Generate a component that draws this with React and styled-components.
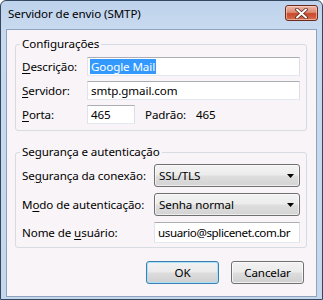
import React from 'react';
import styled, { createGlobalStyle } from 'styled-components';

const Global = createGlobalStyle`
  html, body { margin: 0; padding: 0; width: 323px; height: 300px; overflow: hidden; background: #fff; }
  body { font-family: "Noto Sans", "Open Sans", sans-serif; font-size: 11.6px; letter-spacing: -0.1px; color: #000; }
  #root { width: 323px; height: 300px; }
  * { box-sizing: border-box; }
`;

const Window = styled.div`
  width: 323px;
  height: 300px;
  border: 1px solid #34475c;
  border-radius: 6px 6px 0 0;
  background: linear-gradient(180deg, #bdd2ec 0px, #c8daef 28px, #c4d7ed 100%);
  padding: 0 5px 2px 5px;
  display: flex;
  flex-direction: column;
`;

const TitleBar = styled.div`
  height: 28px;
  display: flex;
  align-items: flex-start;
  padding-left: 2px;
  margin-right: -1px;
`;

const Title = styled.span`
  line-height: 16px;
  margin-top: 5px;
  white-space: nowrap;
`;

const CloseButton = styled.div`
  margin-left: auto;
  margin-top: 4px;
  width: 33px;
  height: 16px;
  border: 1px solid #6b2a1c;
  border-radius: 3px;
  background: linear-gradient(180deg, #eeb8a8 0%, #dc8b74 45%, #c8472b 55%, #d4704f 100%);
  box-shadow: inset 0 0 0 1px rgba(255, 220, 210, 0.55);
  display: flex;
  align-items: center;
  justify-content: center;
`;

const Content = styled.div`
  flex: 1;
  border: 1px solid #8ea4be;
  background: #f8f4f7;
  padding: 6px 9px 0 8px;
  display: flex;
  flex-direction: column;
`;

const Group = styled.fieldset`
  margin: 0;
  margin-top: ${(p) => p.$mt || 0}px;
  min-width: 0;
  border: 1px solid #d6dce2;
  border-radius: 3px;
  padding: ${(p) => p.$pt}px 6px ${(p) => p.$pb}px 6px;
  display: flex;
  flex-direction: column;
  gap: ${(p) => p.$gap}px;
`;

const Legend = styled.legend`
  padding: 0 2px;
  margin-left: -2px;
  line-height: 16px;
`;

const Row = styled.div`
  display: flex;
  align-items: center;
  height: ${(p) => p.$h}px;
`;

const Label = styled.span`
  width: ${(p) => p.$w}px;
  flex: none;
  white-space: nowrap;
  line-height: 16px;
`;

const Key = styled.span`
  text-decoration: underline;
  text-underline-offset: 2px;
  text-decoration-thickness: 1px;
`;

const TextBox = styled.div`
  width: ${(p) => p.$w}px;
  height: ${(p) => p.$h}px;
  flex: none;
  background: #fff;
  border: 1px solid;
  border-color: #abadb3 #dbdfe6 #e3e9ef #e2e3ea;
  padding: 0 3px;
  display: flex;
  align-items: center;
  white-space: nowrap;
  overflow: hidden;
  line-height: 16px;
  letter-spacing: ${(p) => p.$ls ?? -0.1}px;
`;

const Selected = styled.span`
  display: inline-block;
  background: #3399ff;
  color: #fff;
  height: 15px;
  line-height: 15px;
  padding: 0 1px;
  margin-left: -1px;
`;

const Plain = styled.span`
  width: ${(p) => p.$w}px;
  margin-left: ${(p) => p.$ml || 0}px;
  white-space: nowrap;
`;

const Select = styled.div`
  width: 146px;
  height: 23px;
  flex: none;
  border: 1px solid #707070;
  border-radius: 3px;
  background: linear-gradient(180deg, #f3f3f3 0%, #ececec 48%, #dedede 52%, #d3d3d3 100%);
  box-shadow: inset 0 0 0 1px rgba(255, 255, 255, 0.6);
  padding: 0 5px 0 4px;
  display: flex;
  align-items: center;
  justify-content: space-between;
  line-height: 16px;
`;

const ButtonRow = styled.div`
  display: flex;
  justify-content: flex-end;
  gap: 12px;
  margin-top: 13px;
  padding-right: 3px;
`;

const Button = styled.div`
  width: 73px;
  height: 23px;
  border: 1px solid ${(p) => (p.$default ? '#3c7fb1' : '#707070')};
  border-radius: 3px;
  background: linear-gradient(180deg, #f2f2f2 0%, #ebebeb 48%, #dddddd 52%, #cfcfcf 100%);
  box-shadow: inset 0 0 0 1px ${(p) => (p.$default ? '#a9e1f8' : 'rgba(255,255,255,0.7)')};
  display: flex;
  align-items: center;
  justify-content: center;
  line-height: 16px;
`;

const Arrow = () => (
  <svg width="7" height="4" viewBox="0 0 7 4">
    <polygon points="0,0 7,0 3.5,4" fill="#000" />
  </svg>
);

const CloseGlyph = () => (
  <svg width="13" height="11" viewBox="0 0 13 11">
    <path d="M2 1.5 L11 9.5 M11 1.5 L2 9.5" stroke="#5a2418" strokeWidth="3.6" strokeLinecap="round" />
    <path d="M2 1.5 L11 9.5 M11 1.5 L2 9.5" stroke="#ffffff" strokeWidth="2" strokeLinecap="round" />
  </svg>
);

export default function App() {
  return (
    <>
      <Global />
      <Window>
        <TitleBar>
          <Title>Servidor de envio (SMTP)</Title>
          <CloseButton>
            <CloseGlyph />
          </CloseButton>
        </TitleBar>
        <Content>
          <Group $pt={5} $pb={6} $gap={5}>
            <Legend>Configurações</Legend>
            <Row $h={19}>
              <Label $w={65}><Key>D</Key>escrição:</Label>
              <TextBox $w={213} $h={19}><Selected>Google Mail</Selected></TextBox>
            </Row>
            <Row $h={19}>
              <Label $w={65}><Key>S</Key>ervidor:</Label>
              <TextBox $w={213} $h={19}>smtp.gmail.com</TextBox>
            </Row>
            <Row $h={19}>
              <Label $w={65}><Key>P</Key>orta:</Label>
              <TextBox $w={48} $h={19}>465</TextBox>
              <Plain $w={51} $ml={10}>Padrão:</Plain>
              <Plain>465</Plain>
            </Row>
          </Group>
          <Group $mt={13} $pt={4} $pb={4} $gap={6}>
            <Legend>Segurança e autenticação</Legend>
            <Row $h={23}>
              <Label $w={132}>Se<Key>g</Key>urança da conexão:</Label>
              <Select>SSL/TLS<Arrow /></Select>
            </Row>
            <Row $h={23}>
              <Label $w={132}>M<Key>o</Key>do de autenticação:</Label>
              <Select>Senha normal<Arrow /></Select>
            </Row>
            <Row $h={21}>
              <Label $w={132}>Nome de <Key>u</Key>suário:</Label>
              <TextBox $w={146} $h={21} $ls={-0.4}>usuario@splicenet.com.br</TextBox>
            </Row>
          </Group>
          <ButtonRow>
            <Button $default>OK</Button>
            <Button>Cancelar</Button>
          </ButtonRow>
        </Content>
      </Window>
    </>
  );
}
